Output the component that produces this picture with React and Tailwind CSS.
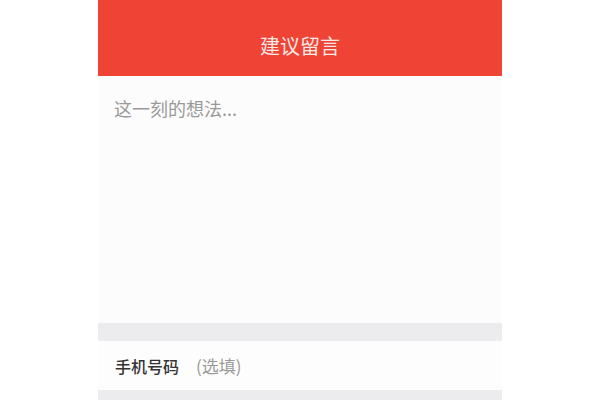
export default function App() {
  return (
    <div className="w-[600px] h-[400px] bg-white flex justify-center overflow-hidden" style={{ fontFamily: '"Noto Sans CJK SC", "Noto Sans", sans-serif' }}>
      <div className="w-[404px] flex flex-col bg-[#fcfcfc]">
        {/* header */}
        <div className="h-[76px] bg-[#ee4335] flex items-end justify-center pb-[17px] shrink-0">
          <span className="text-[20px] text-[#fbe9e6] leading-[26px]">建议留言</span>
        </div>

        {/* textarea */}
        <div className="h-[247px] px-[16px] pt-[19px] shrink-0">
          <textarea
            placeholder="这一刻的想法..."
            className="w-full h-full resize-none bg-transparent outline-none text-[18px] leading-[26px] text-[#333] placeholder:text-[#999]"
          />
        </div>

        <div className="h-[18px] bg-[#ececef] shrink-0" />

        {/* phone row */}
        <div className="h-[49px] flex items-center px-[17px] shrink-0 bg-[#fdfdfd]">
          <span className="text-[16px] font-medium text-[#333] w-[81px]">手机号码</span>
          <input
            placeholder="(选填)"
            className="flex-1 bg-transparent outline-none text-[17px] text-[#333] placeholder:text-[#9a9a9a]"
          />
        </div>

        <div className="flex-1 bg-[#ececef]" />
      </div>
    </div>
  );
}
